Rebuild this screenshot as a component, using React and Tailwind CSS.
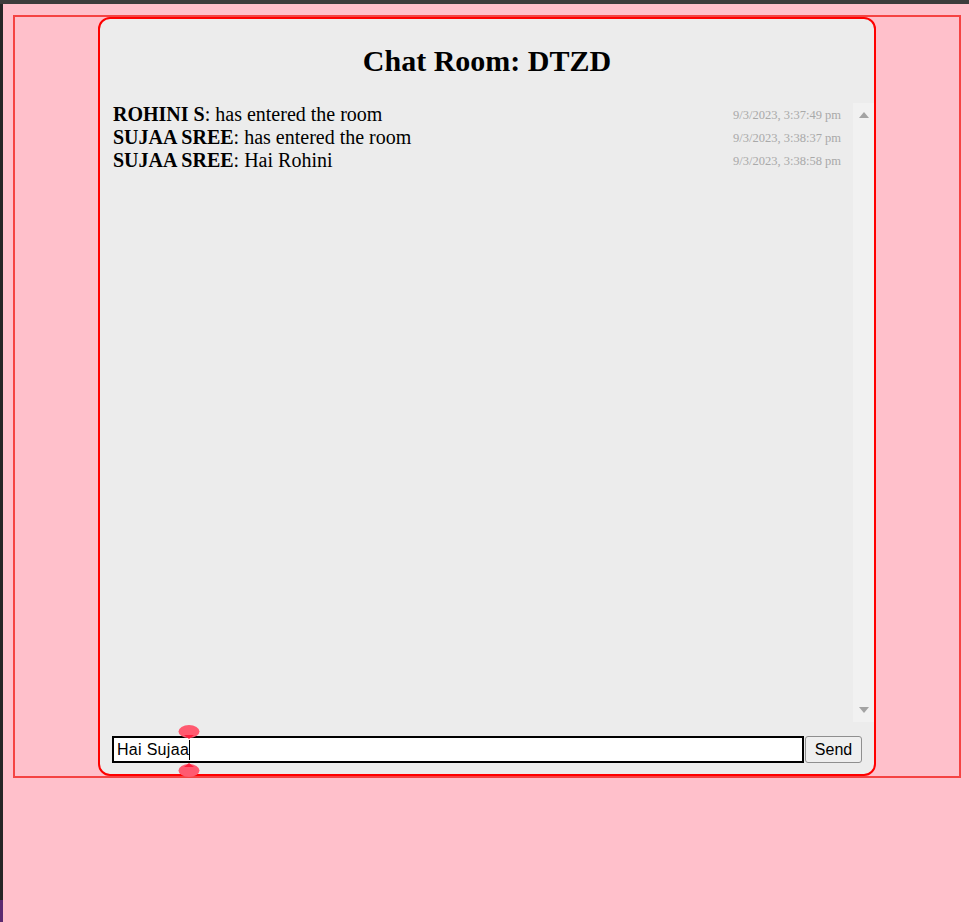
const messages = [
  { user: 'ROHINI S', text: 'has entered the room', time: '9/3/2023, 3:37:49 pm' },
  { user: 'SUJAA SREE', text: 'has entered the room', time: '9/3/2023, 3:38:37 pm' },
  { user: 'SUJAA SREE', text: 'Hai Rohini', time: '9/3/2023, 3:38:58 pm' },
];

function Scrollbar() {
  return (
    <div className="w-[21px] bg-[#f1f1f1] flex flex-col items-center justify-between py-[9px]">
      <svg width="10" height="6" viewBox="0 0 10 6">
        <path d="M0 6 L5 0 L10 6 Z" fill="#a3a3a3" />
      </svg>
      <svg width="10" height="6" viewBox="0 0 10 6">
        <path d="M0 0 L10 0 L5 6 Z" fill="#a3a3a3" />
      </svg>
    </div>
  );
}

function SelectionHandles() {
  return (
    <svg
      className="absolute left-[64px] top-[-13px] pointer-events-none"
      width="22"
      height="52"
      viewBox="0 0 22 52"
    >
      <ellipse cx="11" cy="6.5" rx="10.5" ry="6.5" fill="#ff5a70" />
      <path d="M6 10 L16 10 L11 14 Z" fill="#ff1f3d" />
      <ellipse cx="11" cy="45.5" rx="10.5" ry="6.5" fill="#ff5a70" />
      <path d="M6 42 L16 42 L11 38 Z" fill="#ff1f3d" />
    </svg>
  );
}

export default function App() {
  return (
    <div className="h-[922px] w-[969px] flex flex-col overflow-hidden font-['Liberation_Serif',serif]">
      <div className="h-[4px] bg-[#3c3c3c]" />
      <div className="flex flex-1">
        <div className="w-[3px] bg-[#262626] flex flex-col">
          <div className="flex-1" />
          <div className="h-[22px] bg-[#5b2a70]" />
        </div>
        <div className="flex-1 bg-[#ffc0cb] pt-[11px] pl-[10px]">
          <div className="w-[948px] h-[763px] border-2 border-[#f54343] flex justify-center">
            <div className="w-[778px] h-[759px] border-2 border-[#ff0000] rounded-[12px] bg-[#ececec] flex flex-col pb-[11px]">
              <h1 className="mt-[23px] text-[30px] leading-[37px] font-bold text-center text-black">
                Chat Room: DTZD
              </h1>
              <div className="mt-[24px] flex flex-1">
                <div className="flex-1 pl-[13px] pr-[12px]">
                  {messages.map((m, i) => (
                    <div key={i} className="flex items-center justify-between h-[23px]">
                      <p className="text-[20px] leading-[23px] text-black">
                        <span className="font-bold">{m.user}</span>: {m.text}
                      </p>
                      <span className="text-[12.5px] leading-[14px] text-[#a9a9a9]">{m.time}</span>
                    </div>
                  ))}
                </div>
                <Scrollbar />
              </div>
              <div className="mt-[14px] px-[12px] flex gap-[1px] font-['Liberation_Sans',sans-serif]">
                <div className="relative flex-1 h-[27px] border-2 border-black bg-white flex items-center pl-[3px] text-[16px] text-black">
                  <span className="tracking-[0.3px]">Hai Sujaa</span>
                  <span className="w-[1px] h-[20px] bg-black" />
                  <SelectionHandles />
                </div>
                <button className="w-[57px] h-[27px] border border-[#8f8f8f] rounded-[3px] bg-[#efefef] text-[16px] text-black">
                  Send
                </button>
              </div>
            </div>
          </div>
        </div>
      </div>
    </div>
  );
}
